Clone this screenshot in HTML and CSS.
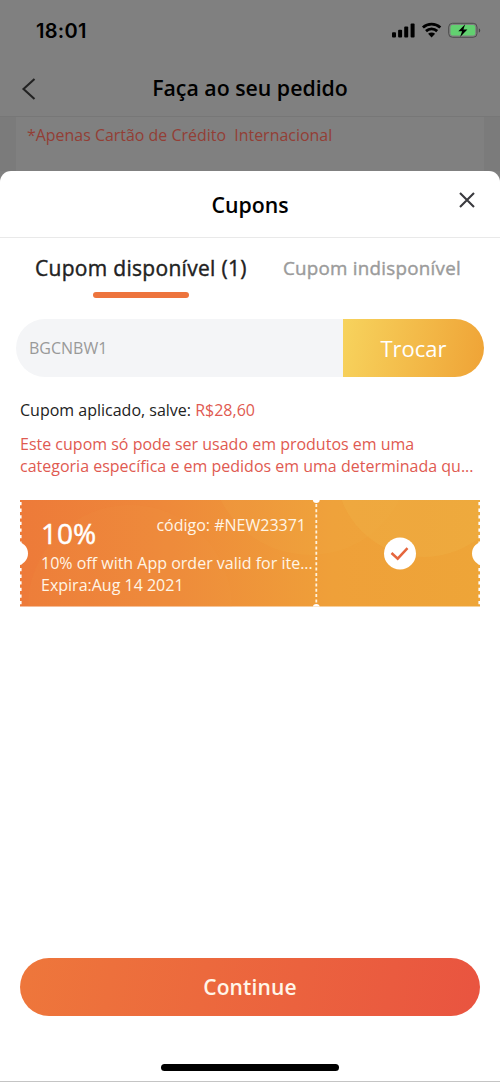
FILE: index.html
```html
<!DOCTYPE html>
<html lang="pt">
<head>
<meta charset="utf-8">
<title>Cupons</title>
<link rel="stylesheet" href="styles.css">
</head>
<body>
<div class="screen">
  <div class="status">
    <span class="time">18:01</span>
    <svg class="status-icons" width="91" height="20" viewBox="0 0 91 20">
      <rect x="2" y="12.2" width="4" height="5.3" rx="1"/>
      <rect x="8.1" y="9.7" width="4" height="7.8" rx="1"/>
      <rect x="14.2" y="6.6" width="4" height="10.9" rx="1"/>
      <rect x="20.6" y="3.5" width="4" height="14" rx="1"/>
      <path d="M32.9 7.5a13 13 0 0 1 17.4 0M36 11.1a8.3 8.3 0 0 1 11.2 0" fill="none" stroke="#000" stroke-width="2.8"/>
      <path d="M38.1 13.8a5.1 5.1 0 0 1 7 0l-3.5 3.7z"/>
      <rect x="58.7" y="3.3" width="28.3" height="14" rx="3.8" fill="none" stroke="#4c4c4c" stroke-width="1"/>
      <rect x="60.5" y="5" width="24.7" height="10.6" rx="2" fill="#62d070"/>
      <path d="M88.8 8.2q1.4.5 1.4 2.2t-1.4 2.2z" fill="#454545"/>
      <path d="M75.2 4.2 68.3 11.3h3.8l-2 5.6 7.3-7.5h-4z"/>
    </svg>
  </div>
  <header class="navbar">
    <svg class="back" width="16" height="24" viewBox="0 0 16 24"><path d="M13.5 2 2.5 12l11 10" fill="none" stroke="#222" stroke-width="2.1"/></svg>
    <h1 class="nav-title">Faça ao seu pedido</h1>
  </header>
  <div class="order"><p class="order-note">*Apenas Cartão de Crédito&nbsp; Internacional</p></div>

  <section class="sheet">
    <div class="sheet-head">
      <h2 class="sheet-title">Cupons</h2>
      <svg class="close" width="18" height="18" viewBox="0 0 18 18"><path d="M2 2 16 16M16 2 2 16" fill="none" stroke="#3a3a3e" stroke-width="2.1"/></svg>
    </div>
    <nav class="tabs">
      <div class="tab tab-on"><span class="tab-on-text">Cupom disponível (1)</span></div>
      <div class="tab"><span class="tab-off-text">Cupom indisponível</span></div>
    </nav>
    <div class="redeem">
      <div class="field"><span class="field-text">BGCNBW1</span></div>
      <div class="redeem-btn"><span class="redeem-text">Trocar</span></div>
    </div>
    <p class="applied"><span class="applied-text">Cupom aplicado, salve: <span class="red">R$28,60</span></span></p>
    <p class="warning red"><span>Este cupom só pode ser usado em produtos em uma</span><br><span>categoria específica e em pedidos em uma determinada qu...</span></p>
    <div class="coupon">
      <svg class="coupon-art" width="460" height="107" viewBox="0 0 460 107">
        <defs>
          <linearGradient id="ticket" x1="0" y1="0" x2="1" y2="0">
            <stop offset="0" stop-color="#ed7a39"/>
            <stop offset=".3" stop-color="#ee883a"/>
            <stop offset=".68" stop-color="#efa039"/>
            <stop offset="1" stop-color="#eea538"/>
          </linearGradient>
          <clipPath id="edge"><rect width="460" height="106.5"/></clipPath>
        </defs>
        <g clip-path="url(#edge)">
          <rect width="460" height="107" fill="url(#ticket)"/>
          <circle cx="110" cy="107" r="102" fill="#f3a044" opacity=".1"/>
          <circle cx="290" cy="-45" r="100" fill="#f5b64b" opacity=".1"/>
          <circle cx="404" cy="-31" r="88" fill="#f2b84a" opacity=".28"/>
          <path d="M0 2V107M460 2V107" stroke="#fff" stroke-width="3.2" stroke-dasharray="3.3 3.3"/>
          <path d="M296.3 4V104" stroke="#fff2dc" stroke-width="1.8" stroke-dasharray="3 2.3"/>
          <g fill="#fff">
            <circle cx="-4" cy="53.5" r="12"/>
            <circle cx="464" cy="53.5" r="12"/>
            <circle cx="296.3" cy="-.5" r="3.5"/>
            <circle cx="296.3" cy="107.5" r="3.5"/>
            <circle cx="380" cy="53.5" r="16"/>
          </g>
        </g>
        <path d="m371.5 53 6.2 5.7 9.8-10.5" fill="none" stroke="#e5663e" stroke-width="2.5"/>
      </svg>
      <div class="coupon-info">
        <div class="coupon-top"><span class="percent">10%</span><span class="code">código: #NEW23371</span></div>
        <div class="line"><span>10% off with App order valid for ite...</span></div>
        <div class="line"><span>Expira:Aug 14 2021</span></div>
      </div>
    </div>
    <div class="continue"><span class="continue-text">Continue</span></div>
    <div class="home"></div>
  </section>
</div>
</body>
</html>
```
FILE: styles.css
```css
* { box-sizing: border-box; }
body { margin: 0; background: #7d7d7d; font-family: "Open Sans", "Noto Sans", sans-serif; }
h1, h2, p { margin: 0; }
span { white-space: nowrap; }
.screen { width: 500px; height: 1082px; display: flex; flex-direction: column; background: #808080; }
.status { height: 60px; flex: none; display: flex; justify-content: space-between; padding: 0 19px 0 36px; }
.time { font: 600 20px/24px Inter, sans-serif; margin-top: 19px; letter-spacing: .3px; }
.status-icons { margin-top: 20px; }
.navbar { height: 57px; flex: none; display: flex; align-items: center; padding: 0 20px; border-bottom: 1px solid #777; }
.back { flex: none; margin: 1px 0 0 1px; }
.nav-title { flex: 1; text-align: center; padding-right: 17px; font-size: 21.3px; line-height: 30px; font-weight: 600; }
.order { height: 54px; flex: none; padding: 7px 11px; border: solid #7b7b7b; border-width: 0 16px; }
.order-note { font-size: 15.95px; line-height: 22px; color: #933e35; }
.sheet { flex: 1; display: flex; flex-direction: column; background: #fff; border-radius: 11px 11px 0 0; border-bottom: 1px solid #c4c4c4; }
.sheet-head { height: 67px; flex: none; display: grid; grid-template-columns: 60px 1fr 60px; border-bottom: 1px solid #e9e9e9; }
.sheet-title { grid-column: 2; text-align: center; margin-top: 19px; font-size: 21.3px; line-height: 30px; font-weight: 600; }
.close { justify-self: center; margin: 20px 7px 0 0; }
.tabs { height: 81.4px; flex: none; display: flex; padding: 15px 32px 0 35px; justify-content: space-between; }
.tab { display: flex; flex-direction: column; align-items: center; line-height: 30px; }
.tab-on::after { content: ""; width: 96px; height: 6px; margin-top: 9px; border-radius: 3px; background: #ed743d; }
.tab-on-text { font-size: 21px; letter-spacing: .3px; color: #222; -webkit-text-stroke: .4px #222; }
.tab-off-text { font-size: 18.8px; letter-spacing: .25px; color: #9b9b9b; -webkit-text-stroke: .4px #9b9b9b; margin-right: 7px; }
.redeem { height: 58px; flex: none; display: flex; margin: 0 16px; border-radius: 29px; overflow: hidden; }
.field { width: 327px; background: #f4f5f7; padding-left: 13px; display: flex; align-items: center; }
.field-text { font-size: 16px; color: #999; }
.redeem-btn { flex: 1; display: flex; align-items: center; justify-content: center; background: linear-gradient(100deg, #f7d35d, #efa336); color: #fff; }
.redeem-text { font-size: 22px; }
.applied { margin: 21px 20px 0; font-size: 16px; line-height: 24px; color: #222; }
.red { color: #df5a51; }
.warning { margin: 10.6px 20px 0; font-size: 16px; line-height: 22px; height: 67px; }
.coupon { height: 107px; flex: none; margin: 0 20px; display: grid; }
.coupon-art, .coupon-info { grid-area: 1 / 1; }
.coupon-info { z-index: 1; width: 296px; padding: 12px 0 0 21px; color: #fff5e6; font-size: 16px; }
.coupon-top { height: 40px; display: flex; justify-content: space-between; padding-right: 10px; }
.percent { font-size: 28px; line-height: 42px; color: #fff; -webkit-text-stroke: .5px #fff; }
.code { line-height: 26px; }
.line { line-height: 22px; }
.continue { height: 58px; flex: none; margin: 351px 20px 0; border-radius: 29px; display: flex; align-items: center; justify-content: center; color: #fff5e8; background: linear-gradient(100deg, #ee773b, #e95440); }
.continue-text { font-size: 21px; letter-spacing: .15px; font-weight: 600; }
.home { width: 178px; height: 7px; flex: none; margin: 48px auto 0; border-radius: 4px; background: #000; }
```
